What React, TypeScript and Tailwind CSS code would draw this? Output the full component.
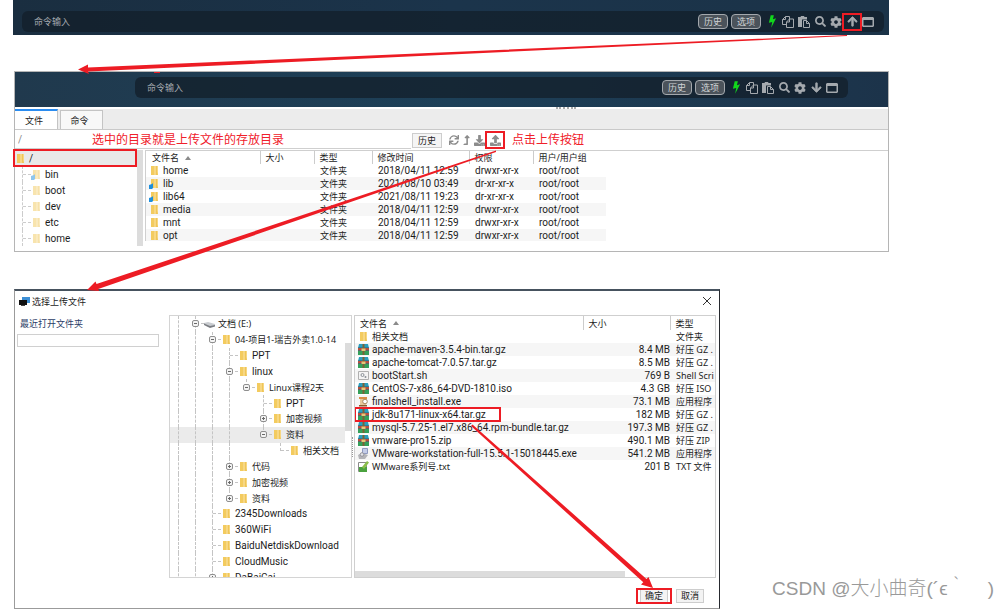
import type { ReactNode } from 'react';
import { FaArrowDown, FaArrowUp, FaCog, FaDownload, FaLevelUpAlt, FaSearch, FaSync, FaUpload } from 'react-icons/fa';

interface RemoteFile {
  name: string;
  time: string;
  perm: string;
  link?: boolean;
}

interface TreeRow {
  // one character per ancestor column: "|" draws a guide line, "." leaves it empty
  guides: string;
  label: string;
  toggle?: 'plus' | 'minus';
  last?: boolean;
  selected?: boolean;
  drive?: boolean;
}

interface LocalFile {
  icon: 'folder' | 'archive' | 'script' | 'installer' | 'setup' | 'text';
  name: string;
  size: string;
  type: string;
}

const remoteFiles: RemoteFile[] = [
  { name: 'home', time: '2018/04/11 12:59', perm: 'drwxr-xr-x' },
  { name: 'lib', time: '2021/08/10 03:49', perm: 'dr-xr-xr-x', link: true },
  { name: 'lib64', time: '2021/08/11 19:23', perm: 'dr-xr-xr-x', link: true },
  { name: 'media', time: '2018/04/11 12:59', perm: 'drwxr-xr-x' },
  { name: 'mnt', time: '2018/04/11 12:59', perm: 'drwxr-xr-x' },
  { name: 'opt', time: '2018/04/11 12:59', perm: 'drwxr-xr-x' },
];

const remoteFolders = ['bin', 'boot', 'dev', 'etc', 'home'];

const localTree: TreeRow[] = [
  { guides: '|', label: '文档 (E:)', toggle: 'minus', drive: true },
  { guides: '||', label: '04-项目1-瑞吉外卖1.0-14', toggle: 'minus' },
  { guides: '|||', label: 'PPT' },
  { guides: '|||', label: 'linux', toggle: 'minus' },
  { guides: '||||', label: 'Linux课程2天', toggle: 'minus', last: true },
  { guides: '||||.', label: 'PPT' },
  { guides: '||||.', label: '加密视频', toggle: 'plus' },
  { guides: '||||.', label: '资料', toggle: 'minus', last: true, selected: true },
  { guides: '||||..', label: '相关文档', last: true },
  { guides: '|||', label: '代码', toggle: 'plus' },
  { guides: '|||', label: '加密视频', toggle: 'plus' },
  { guides: '|||', label: '资料', toggle: 'plus', last: true },
  { guides: '||', label: '2345Downloads' },
  { guides: '||', label: '360WiFi' },
  { guides: '||', label: 'BaiduNetdiskDownload' },
  { guides: '||', label: 'CloudMusic' },
  { guides: '||', label: 'DaBaiCai', toggle: 'plus' },
];

const localFiles: LocalFile[] = [
  { icon: 'folder', name: '相关文档', size: '', type: '文件夹' },
  { icon: 'archive', name: 'apache-maven-3.5.4-bin.tar.gz', size: '8.4 MB', type: '好压 GZ .' },
  { icon: 'archive', name: 'apache-tomcat-7.0.57.tar.gz', size: '8.5 MB', type: '好压 GZ .' },
  { icon: 'script', name: 'bootStart.sh', size: '769 B', type: 'Shell Scri' },
  { icon: 'archive', name: 'CentOS-7-x86_64-DVD-1810.iso', size: '4.3 GB', type: '好压 ISO' },
  { icon: 'installer', name: 'finalshell_install.exe', size: '73.1 MB', type: '应用程序' },
  { icon: 'archive', name: 'jdk-8u171-linux-x64.tar.gz', size: '182 MB', type: '好压 GZ .' },
  { icon: 'archive', name: 'mysql-5.7.25-1.el7.x86_64.rpm-bundle.tar.gz', size: '197.3 MB', type: '好压 GZ .' },
  { icon: 'archive', name: 'vmware-pro15.zip', size: '490.1 MB', type: '好压 ZIP' },
  { icon: 'setup', name: 'VMware-workstation-full-15.5.1-15018445.exe', size: '541.2 MB', type: '应用程序' },
  { icon: 'text', name: 'WMware系列号.txt', size: '201 B', type: 'TXT 文件' },
];

// Chinese glyphs fill their em box, so Latin-only labels are set one size up
const Label = ({ children }: { children: string }) => (
  <span
    className={
      /[\u4e00-\u9fff]/.test(children)
        ? 'whitespace-nowrap'
        : "font-['Roboto','Noto_Sans_CJK_SC',sans-serif] text-[10px] whitespace-nowrap"
    }
  >
    {children}
  </span>
);

const FolderIcon = ({ link = false, faded = false }: { link?: boolean; faded?: boolean }) => (
  <svg viewBox="0 0 11 11" className={faded ? 'h-[11px] w-[11px] shrink-0 opacity-50' : 'h-[11px] w-[11px] shrink-0'}>
    <path d="M2 1h7v9H2z" fill="#f7d783" />
    <path d="M2 1h3v9H2z" fill="#f3cb5f" />
    <path d="M7 1h1v6l1 3H7z" fill="#efc558" />
    {link && <path d="M0 7l3-1 1-1v5l-1 1H0z" fill="#1f8fdc" />}
  </svg>
);

const DriveIcon = () => (
  <svg viewBox="0 0 11 11" className="h-[11px] w-[11px] shrink-0">
    <path d="M0 5l4-1 7 2v2L6.500 9 0 6.500z" fill="#c9ccd0" />
    <path d="M0 5.500L6 8l5-1v1.500L6 10 0 7z" fill="#7b7e83" />
  </svg>
);

const LocalFileIcon = ({ icon }: { icon: LocalFile['icon'] }) => {
  if (icon === 'folder') return <FolderIcon />;

  return (
    <svg viewBox="0 0 11 11" className="h-[11px] w-[11px] shrink-0">
      {icon === 'archive' && (
        <>
          <path d="M1 0h9l1 4H0z" fill="#2b9dbd" />
          <path d="M0 4h11v3H0z" fill="#b5503e" />
          <path d="M0 7h11v4H0z" fill="#35a05a" />
          <path d="M0 6.500h11M0 3.500h11" stroke="#256b86" strokeWidth=".6" />
          <path d="M4.500 0h2v11h-2z" fill="#7d6236" />
          <path d="M3.500 4.500h4v2.500h-4z" fill="#e6c878" />
        </>
      )}
      {icon === 'script' && (
        <>
          <path d="M.5 1.500h10v8H.5z" fill="#f4f4f4" stroke="#b0b0b0" />
          <circle cx="4.500" cy="5" r="1.500" fill="none" stroke="#8a9097" />
          <circle cx="7.500" cy="7" r="1" fill="#8a9097" />
        </>
      )}
      {icon === 'installer' && (
        <>
          <path d="M1 1h8v2H1z" fill="#d98f45" />
          <path d="M2 3h7l-1 7H2z" fill="#e8c79a" />
          <circle cx="7" cy="5.500" r="2.300" fill="#fff" stroke="#a9855c" />
          <path d="M1 9h8v1.500H1z" fill="#8b5a2e" />
        </>
      )}
      {icon === 'setup' && (
        <>
          <path d="M4.500.5h5v5h-5z" fill="#c5cde8" stroke="#8f9ac0" />
          <path d="M0 7l4-2 6 2-3 4H1z" fill="#b4b4b8" />
          <circle cx="4" cy="6.500" r="1.800" fill="#e3e4ea" stroke="#95959c" />
        </>
      )}
      {icon === 'text' && (
        <>
          <path d="M.5 1.500h8v9h-8z" fill="#fff" stroke="#8a8a8a" />
          <path d="M1 6h8v5H1z" fill="#4ba23f" />
          <path d="M4 6l5-6 2 1.500L6 8z" fill="#8bbf4a" />
        </>
      )}
    </svg>
  );
};

const BoltIcon = () => (
  <svg viewBox="0 0 10 14" className="h-[13px] w-[9px]" fill="#12d71c">
    <path d="M3 0h3.500L5.500 4.500 9 3.500 3.500 14l1.200-6.500L1 8.500z" />
  </svg>
);

const CopyIcon = () => (
  <svg viewBox="0 0 12 12" className="h-3 w-3" fill="none" stroke="currentColor">
    <path d="M7.500 3V.5h-4l-3 3v5H4M3.500.5v3h-3" />
    <path d="M7.500 3H11.500v8.500H4.500V6zM7.500 3v3h-3" />
  </svg>
);

const PasteIcon = () => (
  <svg viewBox="0 0 12 12" className="h-3 w-3">
    <path d="M0 1h2.500L3 0h3l.5 1H9v2.500H4V11H0z" fill="currentColor" />
    <path d="M5.500 4.500h3l3 3v4h-6zM8.500 4.500v3h3" fill="none" stroke="currentColor" />
  </svg>
);

const WindowIcon = () => (
  <svg viewBox="0 0 12 10" className="h-2.5 w-3" fill="currentColor">
    <path d="M1 0h10l1 1v8l-1 1H1L0 9V1zM1.500 3v5.500h9V3z" fillRule="evenodd" />
  </svg>
);

const IconButton = ({ label, marked = false, children }: { label: string; marked?: boolean; children: ReactNode }) => (
  <button type="button" aria-label={label} className="relative flex h-4 w-4 items-center justify-center">
    {children}
    {marked && <span className="absolute -inset-x-0.5 -top-px -bottom-px border-2 border-[#ed1c24]"></span>}
  </button>
);

const PillButton = ({ children }: { children: ReactNode }) => (
  <button
    type="button"
    className="mr-[3px] h-[15px] w-[30px] rounded border border-[#a3a8ad] bg-[#4b535b] text-center leading-[13px] text-[#d0d3d6]"
  >
    {children}
  </button>
);

const CommandBar = ({ collapsed = false }: { collapsed?: boolean }) => (
  <div className="flex h-[21px] grow items-center rounded-md bg-[#131f29]/75 pr-2 pl-3 text-[#a4a9ae]">
    <input
      aria-label="命令输入"
      placeholder="命令输入"
      className="min-w-0 grow bg-transparent outline-none placeholder:text-[#a4a9ae]"
    />
    <PillButton>历史</PillButton>
    <PillButton>选项</PillButton>
    <IconButton label="闪电">
      <BoltIcon />
    </IconButton>
    <IconButton label="复制">
      <CopyIcon />
    </IconButton>
    <IconButton label="粘贴">
      <PasteIcon />
    </IconButton>
    <IconButton label="搜索">
      <FaSearch size={11} />
    </IconButton>
    <IconButton label="设置">
      <FaCog size={12} />
    </IconButton>
    <IconButton label={collapsed ? '展开' : '收起'} marked={collapsed}>
      {collapsed ? (
        <FaArrowUp size={11} stroke="currentColor" strokeWidth={30} />
      ) : (
        <FaArrowDown size={11} stroke="currentColor" strokeWidth={30} />
      )}
    </IconButton>
    <IconButton label="窗口">
      <WindowIcon />
    </IconButton>
  </div>
);

const SortMark = () => (
  <svg viewBox="0 0 6 4" className="mb-0.5 ml-1.5 inline-block h-1 w-1.5" fill="#8a8a8a">
    <path d="M3 0l3 4H0z" />
  </svg>
);

const RemotePanel = () => (
  <section className="border border-[#b5b5b5] bg-white">
    <div className="flex h-[35px] items-center bg-linear-to-r from-[#20394d] via-[#1d4058] to-[#1c334a] pr-10 pb-1 pl-[120px]">
      <CommandBar />
    </div>
    <div className="flex h-0.5 justify-end pr-[312px]">
      <span className="w-5 border-t-2 border-dotted border-[#aaa]"></span>
    </div>
    <div className="flex h-[21px] items-end border-b border-[#c9c9c9] bg-[#ececec] text-[#222]">
      <button type="button" className="mr-0.5 h-5 w-[43px] border-t-2 border-r border-[#c4c4c4] border-t-[#2a8cf0] bg-white pr-1">
        文件
      </button>
      <button type="button" className="h-[19px] w-[43px] border border-b-0 border-[#c4c4c4] bg-[#f8f8f8] pr-1">
        命令
      </button>
    </div>
    <div className="flex h-5 items-center">
      <div className="mr-px flex h-[17px] w-[396px] items-center border-b border-[#cfcfcf]">
        <input
          aria-label="路径"
          defaultValue="/"
          className="w-[77px] pl-[3px] font-['Roboto',sans-serif] text-[10px] text-[#888] outline-none"
        />
        <span className="text-xs text-[#f0202a]">选中的目录就是上传文件的存放目录</span>
      </div>
      <button type="button" className="mr-1 h-[15px] w-[30px] border border-[#cdcdcd] bg-[#f5f5f5] leading-[13px]">
        历史
      </button>
      <div className="flex items-center text-[#8c8c8c]">
        <IconButton label="刷新">
          <FaSync size={10} />
        </IconButton>
        <button type="button" aria-label="上级目录" className="flex w-[9px] justify-center">
          <FaLevelUpAlt size={10} />
        </button>
        <IconButton label="下载">
          <FaDownload size={11} />
        </IconButton>
        <IconButton label="上传" marked>
          <FaUpload size={11} />
        </IconButton>
      </div>
      <span className="ml-[9px] text-xs text-[#f0202a]">点击上传按钮</span>
    </div>
    <div className="mb-[5px] flex">
      <ul className="w-[122px] shrink-0">
        <li className="relative flex h-4 items-center bg-[#e9e9e9]">
          <FolderIcon />
          <span className="ml-[3px] flex">
            <Label>/</Label>
          </span>
          <span className="absolute -inset-y-px right-0 -left-0.5 border-2 border-[#ed1c24]"></span>
        </li>
        {remoteFolders.map((folder) => (
          <li key={folder} className="ml-[7px] flex h-4 items-center border-l border-dashed border-[#ccc]">
            <span className="w-2 border-t border-dashed border-[#ccc]"></span>
            <FolderIcon faded link={folder === 'bin'} />
            <span className="ml-[3px] flex">
              <Label>{folder}</Label>
            </span>
          </li>
        ))}
      </ul>
      <div className="mr-0.5 w-1.5 shrink-0 bg-[#dcdcdc]"></div>
      <div className="h-[91px] grow overflow-hidden border-t border-l border-[#cfcfcf]">
        <table className="w-[460px] table-fixed text-left">
          <colgroup>
            <col className="w-[114px]" />
            <col className="w-[54px]" />
            <col className="w-[58px]" />
            <col className="w-[97px]" />
            <col className="w-16" />
            <col />
          </colgroup>
          <thead>
            <tr className="h-[13px]">
              <th className="p-0 pl-1.5 font-normal">
                文件名
                <SortMark />
              </th>
              {['大小', '类型', '修改时间', '权限', '用户/用户组'].map((title) => (
                <th key={title} className="border-l border-[#ccc] p-0 pl-[5px] font-normal">
                  {title}
                </th>
              ))}
            </tr>
          </thead>
          <tbody>
            {remoteFiles.map((file) => (
              <tr key={file.name} className="h-[13px] even:bg-[#f6f6f6]">
                <td className="p-0 pl-[3px]">
                  <div className="flex items-center">
                    <FolderIcon link={file.link} />
                    <span className="ml-[3px] flex">
                      <Label>{file.name}</Label>
                    </span>
                  </div>
                </td>
                <td></td>
                <td className="p-0 pl-1.5">文件夹</td>
                <td className="p-0 pl-1.5">
                  <div className="flex">
                    <Label>{file.time}</Label>
                  </div>
                </td>
                <td className="p-0 pl-1.5">
                  <div className="flex">
                    <Label>{file.perm}</Label>
                  </div>
                </td>
                <td className="p-0 pl-1.5">
                  <div className="flex">
                    <Label>root/root</Label>
                  </div>
                </td>
              </tr>
            ))}
          </tbody>
        </table>
      </div>
    </div>
  </section>
);

const ToggleBox = ({ kind }: { kind: 'plus' | 'minus' }) => (
  <svg viewBox="0 0 7 7" className="relative h-[7px] w-[7px]" fill="#f4f4f4" stroke="#8f8f8f">
    <rect x=".5" y=".5" width="6" height="6" rx="1.500" />
    <path d={kind === 'plus' ? 'M2 3.500h3M3.500 2v3' : 'M2 3.500h3'} stroke="#6a6a6a" />
  </svg>
);

const LocalTreeRow = ({ row }: { row: TreeRow }) => (
  <li className={row.selected ? 'flex flex-1 items-center bg-[#ebebeb]' : 'flex flex-1 items-center'}>
    {row.guides.split('').map((guide, i) => (
      <span key={i} className="flex w-[17px] shrink-0 justify-center self-stretch">
        {guide === '|' && <span className="border-l border-dashed border-[#c4c4c4]"></span>}
      </span>
    ))}
    <span className="flex w-[17px] shrink-0 self-stretch pl-2">
      <span
        className={
          row.last
            ? 'h-1/2 border-l border-dashed border-[#c4c4c4]'
            : 'h-full border-l border-dashed border-[#c4c4c4]'
        }
      ></span>
      <span className="w-2 self-center border-t border-dashed border-[#c4c4c4]"></span>
      {row.toggle && (
        <span className="-ml-3 self-center">
          <ToggleBox kind={row.toggle} />
        </span>
      )}
    </span>
    {row.drive ? <DriveIcon /> : <FolderIcon />}
    <span className="ml-[3px] flex">
      <Label>{row.label}</Label>
    </span>
  </li>
);

const UploadDialog = () => (
  <section className="w-full max-w-[706px] border border-t-2 border-[#9b9b9b] border-t-[#46525e] border-r-[#26292e] bg-white">
    <header className="flex h-5 items-center pr-2 pl-1">
      <svg viewBox="0 0 11 11" className="mr-0.5 h-[11px] w-[11px]">
        <path d="M3 1h8v6H3z" fill="#3c8fd6" />
        <path d="M0 4h8v5H0z" fill="#111" />
        <path d="M2 9h4v1H2z" fill="#444" />
      </svg>
      <h2 className="grow">选择上传文件</h2>
      <button type="button" aria-label="关闭">
        <svg viewBox="0 0 8 8" className="h-2 w-2" stroke="#333" fill="none">
          <path d="M0 0l8 8M8 0L0 8" />
        </svg>
      </button>
    </header>
    <div className="mt-1 flex pr-[3px]">
      <div className="w-[154px] shrink-0 pt-0.5 pl-0.5">
        <label htmlFor="recent" className="block pl-[3px] text-[#2b3c66]">
          最近打开文件夹
        </label>
        <input id="recent" className="mt-1 block h-[13px] w-[142px] border border-[#d0d0d0] outline-none" />
      </div>
      <div className="flex h-[263px] w-[183px] shrink-0 overflow-hidden border border-[#d4d4d4]">
        <ul className="flex h-[269px] min-w-0 grow flex-col">
          {localTree.map((row, i) => (
            <LocalTreeRow key={i} row={row} />
          ))}
        </ul>
        <div className="mt-[27px] h-[88px] w-1.5 shrink-0 bg-[#dcdcdc]"></div>
      </div>
      <div className="flex w-0.5 shrink-0 items-center">
        <span className="h-5 border-l border-dotted border-[#999]"></span>
      </div>
      <div className="flex h-[263px] min-w-0 grow flex-col justify-between overflow-hidden border border-[#cfcfcf]">
        <table className="w-full table-fixed text-left whitespace-nowrap">
          <colgroup>
            <col />
            <col className="w-[87px]" />
            <col className="w-[45px]" />
          </colgroup>
          <thead>
            <tr className="h-3.5">
              <th className="p-0 pl-[5px] font-normal">
                文件名
                <SortMark />
              </th>
              <th className="border-l border-[#ccc] p-0 pl-[5px] font-normal">大小</th>
              <th className="border-l border-[#ccc] p-0 pl-[5px] font-normal">类型</th>
            </tr>
          </thead>
          <tbody>
            {localFiles.map((file) => (
              <tr key={file.name} className="h-[13px] even:bg-[#f6f6f6]">
                <td className="p-0 pl-[3px]">
                  <div className="relative flex items-center">
                    <LocalFileIcon icon={file.icon} />
                    <span className="ml-[3px] flex">
                      <Label>{file.name}</Label>
                    </span>
                    {file.name.startsWith('jdk') && (
                      <span className="absolute -inset-y-px -left-1 w-[147px] border-2 border-[#ed1c24]"></span>
                    )}
                  </div>
                </td>
                <td className="p-0">
                  <div className="flex justify-end">
                    <Label>{file.size}</Label>
                  </div>
                </td>
                <td className="p-0 pl-1.5">{file.type}</td>
              </tr>
            ))}
          </tbody>
        </table>
        <div className="h-1.5 w-3/4 bg-[#dcdcdc]"></div>
      </div>
    </div>
    <footer className="flex h-[30px] items-center justify-end gap-2 pt-1.5 pr-[15px]">
      <button type="button" className="relative h-3.5 w-7 border border-[#cdcdcd] bg-[#f3f3f3] leading-3">
        确定
        <span className="absolute -inset-x-[5px] -inset-y-0.5 border-2 border-[#ed1c24]"></span>
      </button>
      <button type="button" className="h-3.5 w-7 border border-[#cdcdcd] bg-[#f3f3f3] leading-3">
        取消
      </button>
    </footer>
  </section>
);

const Arrows = () => (
  <svg
    viewBox="0 0 1006 609"
    className="pointer-events-none absolute top-0 left-0 h-[609px] w-[1006px]"
    fill="#ed1c24"
    aria-hidden="true"
  >
    <path d="M78 69.500L88 64.500V67.500L847 35V36L88 71.500L89 74z" />
    <path d="M87 290L95.500 281.500L96.500 284L496 150.500V152L98.200 289L99 291z" />
    <path d="M653 588L648.500 577L646.500 579L472.500 424.500L471 426L643.300 582.300L641 584.500z" />
    <path d="M154 72h6v1h-6z" />
  </svg>
);

export default function App() {
  return (
    <main className="relative bg-white font-['Noto_Sans','Noto_Sans_CJK_SC',sans-serif] text-[9px] leading-[13px] text-[#1c1c1c]">
      <div className="mr-[117px] ml-[13px] flex h-[35px] items-end bg-linear-to-r from-[#1a2e40] via-[#1b344b] to-[#1b3348] pr-[5px] pb-[3px] pl-[9px]">
        <CommandBar collapsed />
      </div>
      <div className="mt-9 mr-[117px] ml-[14px]">
        <RemotePanel />
      </div>
      <div className="mt-[37px] flex items-end justify-between pr-3 pl-[14px]">
        <UploadDialog />
        <p className="mb-1.5 shrink-0 font-['Liberation_Sans','Noto_Sans_CJK_SC',sans-serif] text-[19px] leading-7 font-light whitespace-pre text-[#999]">
          CSDN @大小曲奇(´ϵ｀{'    '})
        </p>
      </div>
      <Arrows />
    </main>
  );
}
